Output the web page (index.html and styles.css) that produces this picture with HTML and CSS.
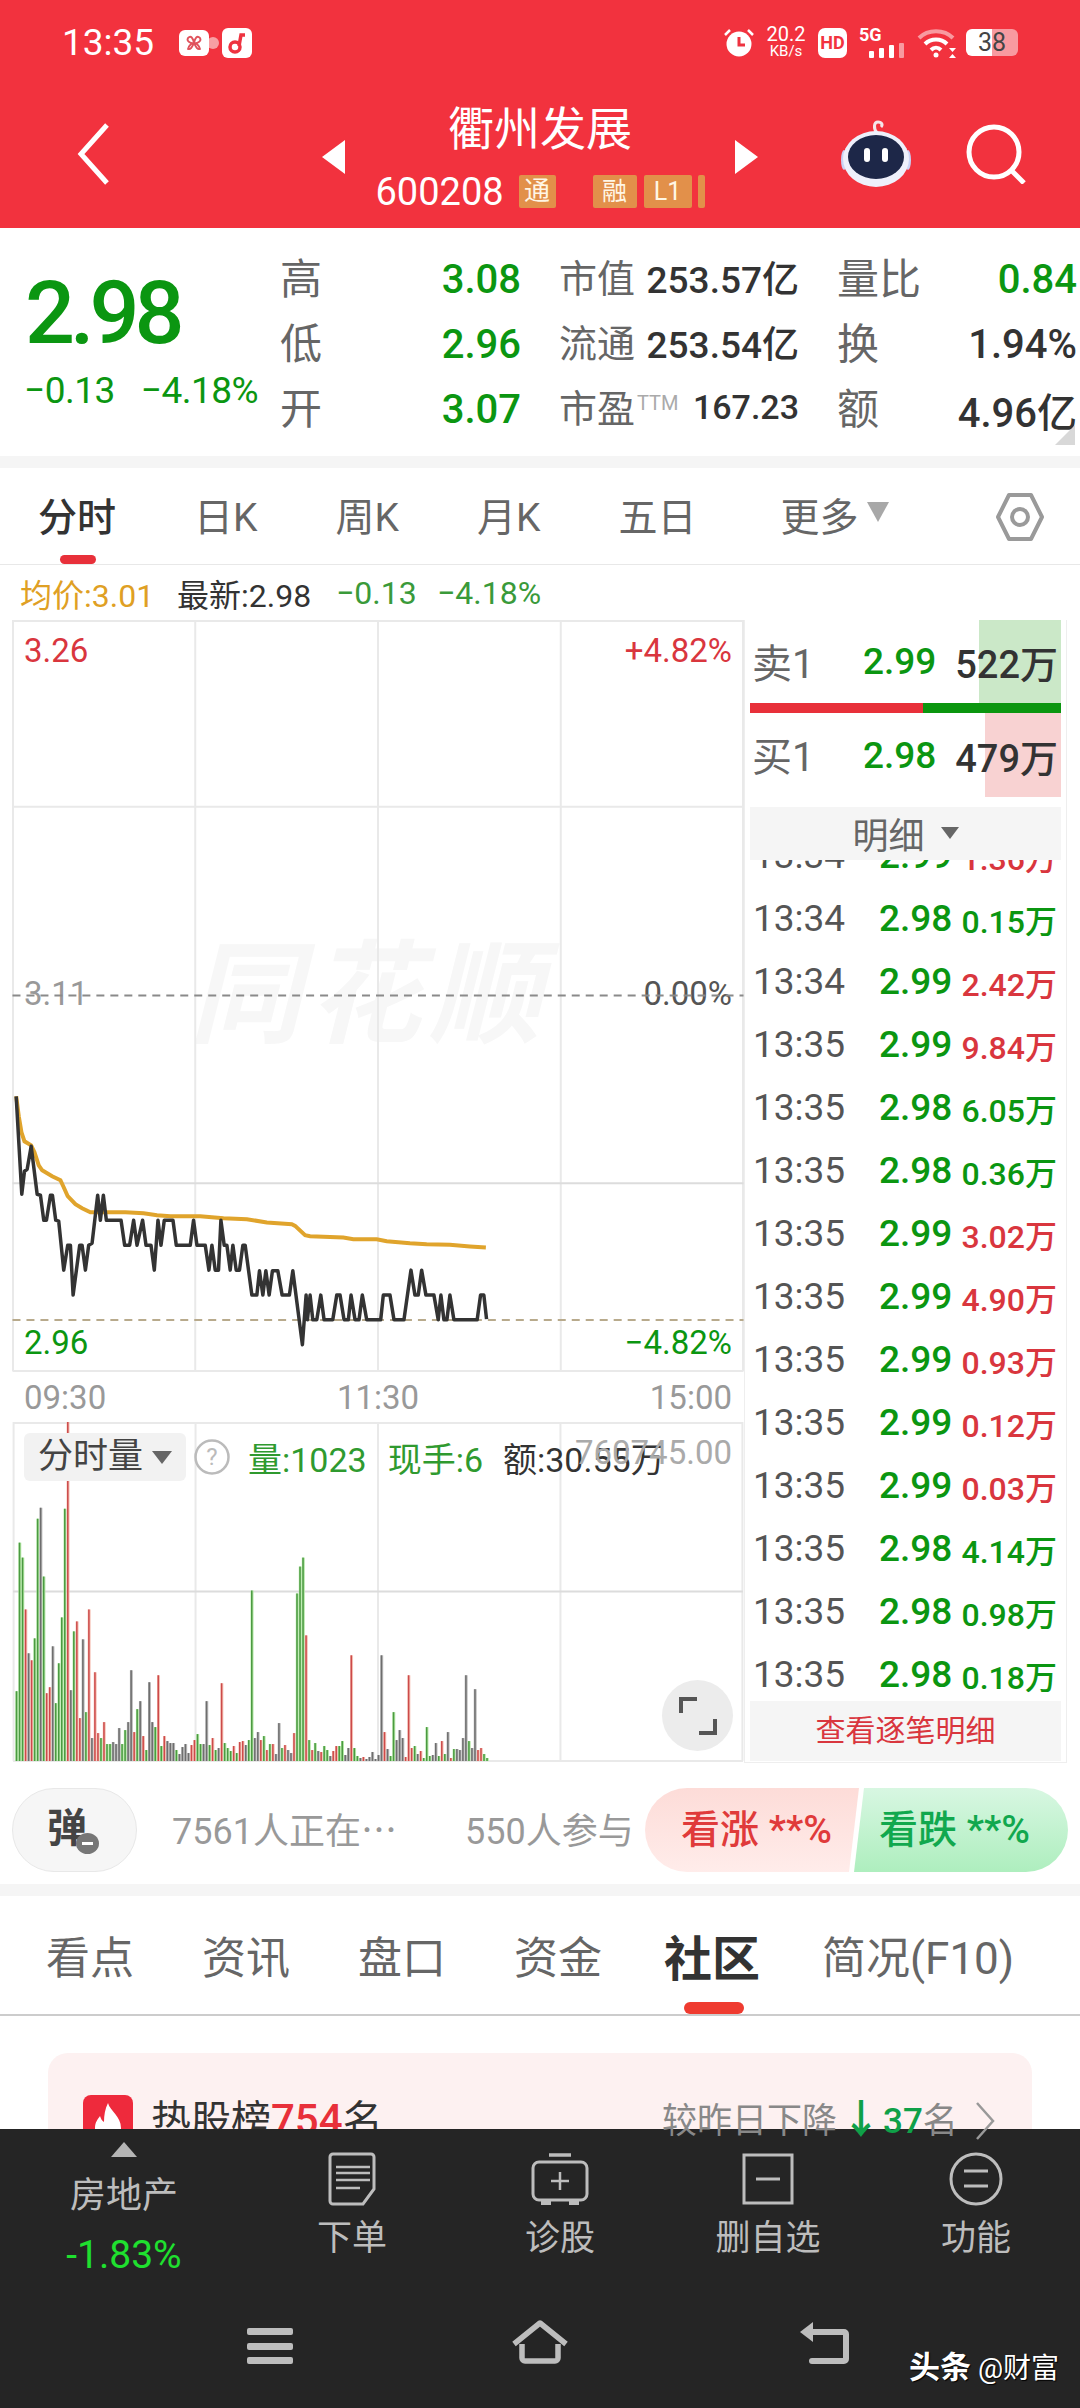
FILE: index.html
```html
<!DOCTYPE html>
<html>
<head>
    <title>衢州发展</title>
    <meta name="viewport" content="width=device-width, initial-scale=1.0">
    <link rel="stylesheet" href="styles.css">
</head>
<body>
<div class="screen">
<main class="content">
    <header class="top-header">
        <div class="status-bar">
            <span class="status-time">13:35</span>
            <svg class="status-app-a" viewBox="0 0 40 26"><circle cx="34" cy="13" r="6" fill="#f7a0a4"/><rect width="30" height="26" rx="6" fill="#fff"/><path d="M9 8c3-3 5 0 6 5 1-5 3-8 6-5 2 3-3 6-6 5-3 1-8-2-6-5zm0 11c1-4 4-6 6-6s5 2 6 6c-3 1-4-2-6-6-2 4-3 7-6 6z" fill="none" stroke="#e0525c" stroke-width="1.8"/></svg>
            <svg class="status-app-b" viewBox="0 0 30 30"><rect width="30" height="30" rx="6" fill="#fff"/><circle cx="13" cy="19" r="5" fill="none" stroke="#ee3340" stroke-width="3.5"/><path d="M17 18 19 7h4" fill="none" stroke="#ee3340" stroke-width="3.5"/></svg>
            <div class="status-right">
                <svg class="status-alarm" viewBox="0 0 32 30"><circle cx="16" cy="16" r="12.5" fill="#fff"/><path d="M16 9v8h6" fill="none" stroke="#ee3340" stroke-width="3"/><path d="M2 7 7 2M30 7l-5-5" stroke="#fff" stroke-width="2.5" fill="none"/></svg>
                <div class="status-speed"><span class="speed-num">20.2</span><span class="speed-unit">KB/s</span></div>
                <span class="status-hd">HD</span>
                <div class="status-signal">
                    <span class="signal-5g">5G</span>
                    <svg class="signal-bars" viewBox="0 0 35 15"><rect x="0" y="8" width="5" height="7" rx="1" fill="#fff"/><rect x="10" y="5" width="5" height="10" rx="1" fill="#fff"/><rect x="20" y="2" width="5" height="13" rx="1" fill="#fff"/><rect x="30" y="0" width="5" height="15" rx="1" fill="#f89aa0"/></svg>
                </div>
                <svg class="status-wifi" viewBox="0 0 40 30"><path d="M2 10c9-9 25-9 34 0" fill="none" stroke="#f89aa0" stroke-width="4"/><path d="M8 16c6-6 16-6 22 0" fill="none" stroke="#fff" stroke-width="4"/><path d="M14 22c3-3 7-3 10 0" fill="none" stroke="#fff" stroke-width="4"/><circle cx="19" cy="27" r="2.5" fill="#fff"/><path d="M32 20h7l-3.5 4zM32 30h7l-3.5-4z" fill="#fff"/></svg>
                <div class="status-battery"><span class="battery-num">38</span></div>
            </div>
        </div>
        <div class="nav-row">
            <svg class="nav-back" viewBox="0 0 33 64"><path d="M30 3 4 32l26 29" fill="none" stroke="#fff" stroke-width="5"/></svg>
            <span class="stock-arrow stock-arrow-left"></span>
            <div class="stock-title">
                <div class="stock-name">衢州发展</div>
                <div class="stock-code-row">
                    <span class="stock-code">600208</span>
                    <span class="stock-tag stock-tag-tong">通</span>
                    <span class="stock-tag stock-tag-rong">融</span>
                    <span class="stock-tag stock-tag-l1">L1</span>
                    <span class="stock-tag stock-tag-cut"></span>
                </div>
            </div>
            <span class="stock-arrow stock-arrow-right"></span>
            <svg class="nav-robot" viewBox="0 0 72 68">
                <path d="M37 13C33 8 34 2 38 2s5 3 3 5" fill="none" stroke="#f4e6ea" stroke-width="3"/>
                <ellipse cx="4" cy="40" rx="3" ry="10" fill="#c9d2f5"/>
                <ellipse cx="68" cy="40" rx="3" ry="10" fill="#c9d2f5"/>
                <ellipse cx="36" cy="39" rx="33" ry="28" fill="#eef0fb"/>
                <ellipse cx="36" cy="37" rx="28" ry="22" fill="#1d2748"/>
                <rect x="24" y="28" width="6" height="14" rx="3" fill="#fff"/>
                <rect x="42" y="28" width="6" height="14" rx="3" fill="#fff"/>
            </svg>
            <svg class="nav-search" viewBox="0 0 60 60"><circle cx="28" cy="28" r="25" fill="none" stroke="#fff" stroke-width="5"/><path d="M46 47l12 12" stroke="#fff" stroke-width="5"/></svg>
        </div>
    </header>

    <section class="quote">
        <div class="quote-main">
            <div class="quote-price">2.98</div>
            <div class="quote-change"><span>−0.13</span><span>−4.18%</span></div>
        </div>
        <div class="quote-grid">
            <div class="quote-cell"><span class="quote-label">高</span><span class="quote-num quote-green">3.08</span></div>
            <div class="quote-cell"><span class="quote-label quote-label-sm">市值</span><span class="quote-value">253.57亿</span></div>
            <div class="quote-cell"><span class="quote-label">量比</span><span class="quote-num quote-green">0.84</span></div>
            <div class="quote-cell"><span class="quote-label">低</span><span class="quote-num quote-green">2.96</span></div>
            <div class="quote-cell"><span class="quote-label quote-label-sm">流通</span><span class="quote-value">253.54亿</span></div>
            <div class="quote-cell"><span class="quote-label">换</span><span class="quote-num">1.94%</span></div>
            <div class="quote-cell"><span class="quote-label">开</span><span class="quote-num quote-green">3.07</span></div>
            <div class="quote-cell"><span class="quote-label quote-label-sm">市盈<sup class="quote-ttm">TTM</sup></span><span class="quote-value quote-value-pe">167.23</span></div>
            <div class="quote-cell"><span class="quote-label">额</span><span class="quote-num">4.96亿</span></div>
        </div>
        <span class="quote-corner"></span>
    </section>

    <nav class="chart-tabs">
        <span class="chart-tab chart-tab-on">分时</span>
        <span class="chart-tab">日K</span>
        <span class="chart-tab">周K</span>
        <span class="chart-tab">月K</span>
        <span class="chart-tab">五日</span>
        <span class="chart-tab chart-tab-more">更多<i class="more-caret"></i></span>
        <svg class="chart-setting" viewBox="0 0 50 48"><path d="M14 2h22l11 22-11 22H14L3 24z" fill="none" stroke="#9a9a9a" stroke-width="4" stroke-linejoin="round"/><circle cx="25" cy="24" r="8" fill="none" stroke="#9a9a9a" stroke-width="4"/></svg>
    </nav>

    <div class="legend">
        <span class="legend-gold">均价:3.01</span>
        <span class="legend-dark">最新:2.98</span>
        <span class="legend-green">−0.13</span>
        <span class="legend-green">−4.18%</span>
    </div>

    <section class="market">
        <div class="market-left">
            <div class="price-chart">
                <span class="chart-mark">同花顺</span>
                <span class="chart-label label-left label-top label-red">3.26</span>
                <span class="chart-label label-right label-top label-red">+4.82%</span>
                <span class="chart-label label-left label-mid label-grey">3.11</span>
                <span class="chart-label label-right label-mid label-dark">0.00%</span>
                <span class="chart-label label-left label-low label-green">2.96</span>
                <span class="chart-label label-right label-low label-green">−4.82%</span>
                <svg class="chart-svg" viewBox="12 620 732 753">
                    <path class="grid-line" d="M12.5 620v752M195 620v752M378 620v752M561 620v752M743.5 620v752M12 621h732M12 807h732M12 1372h732"/>
                    <path class="grid-line-dark" d="M12 1184h732"/>
                    <path class="dash-mid" d="M12 996h732"/>
                    <path class="dash-low" d="M12 1321h732"/>
                    <polyline class="line-avg" points="15.7,1097 18.3,1117 21,1133 24,1142 30.7,1146 34,1153 38.3,1166 41.7,1171 51.7,1177 60,1181 63.3,1188 67.3,1197 75,1205 81.7,1209 90,1213 110,1213 125,1213 143.3,1214 156.7,1216 170,1217 200,1217 223.3,1219 246.7,1220 266.7,1223.3 291.7,1225 295,1226.7 305,1236 310,1237 343.3,1238.3 353.3,1240 376.7,1240 386.7,1242 410,1244 426.7,1245 450,1245.7 470,1247.3 486,1248.3"/>
                    <polyline class="line-price" points="15.7,1097 21.3,1195 24,1172 26.7,1170 30.7,1147 36.7,1195 40,1196 43.3,1221 46,1221 50,1196 52,1196 55.3,1221 58.3,1222 63.3,1271 67.3,1246 70,1246 72.7,1296 79.3,1246 81.7,1246 85,1271 88.3,1246 91.7,1244 97.3,1196 100,1221 103,1196 106,1221 120.7,1221 124.3,1246 129.3,1246 133.3,1221 136.7,1246 142.3,1221 145.7,1246 150.7,1246 154,1271 157.7,1221 160.7,1246 164,1221 172.7,1221 176,1246 190,1246 193.3,1221 196.7,1246 205,1246 208.7,1271 211.7,1246 215,1271 218.3,1271 220.7,1221 224,1246 226.7,1246 230,1271 232.7,1246 236,1271 239.3,1271 242.7,1246 245,1246 251.7,1296 256.7,1296 259.3,1271.7 262.7,1296 265.7,1271.7 269,1296 272.3,1271.7 277.7,1271.7 282,1296 289.3,1296 292.7,1271.7 302.3,1345.7 306,1296 307.3,1320.7 310,1296 312.7,1320.7 316.7,1320.7 320.7,1296 324,1320.7 332.7,1320.7 336.7,1296 340,1296 344,1320.7 348.3,1320.7 351,1296 355,1320.7 359,1320.7 362.3,1296 366.7,1320.7 380.7,1320.7 383.3,1296 390,1296 394,1320.7 404,1320.7 411,1271 415,1296 418.3,1296 421.7,1271 426,1296 434,1296 438.3,1320.7 441,1296 444,1320.7 447,1320.7 450,1296 454,1320.7 477.3,1320.7 480.7,1296 484,1296 486.7,1320"/>
                </svg>
            </div>
            <div class="time-axis"><span>09:30</span><span>11:30</span><span>15:00</span></div>
            <div class="volume-chart">
                <svg class="chart-svg" id="volumeSvg" viewBox="12 1422 732 341">
                    <path class="grid-line" d="M12.5 1422v340M195 1422v340M378 1422v340M561 1422v340M743.5 1422v340M12 1423h732M12 1762h732"/>
                    <path class="grid-line-dark" d="M12 1592h732"/>
                </svg>
                <div class="volume-head">
                    <span class="volume-select">分时量<i class="select-caret"></i></span>
                    <svg class="volume-help" viewBox="0 0 36 36"><circle cx="18" cy="18" r="16.5" fill="none" stroke="#bbb" stroke-width="2.5"/><text x="18" y="26" text-anchor="middle" class="help-mark">?</text></svg>
                    <span class="volume-green">量:1023</span>
                    <span class="volume-green">现手:6</span>
                    <span class="volume-dark">额:30.55万</span>
                </div>
                <span class="volume-max">760745.00</span>
                <span class="expand-btn">
                    <svg viewBox="0 0 38 38"><path d="M2 16V2h16M36 22v14H20" fill="none" stroke="#555" stroke-width="4"/></svg>
                </span>
            </div>
        </div>

        <aside class="side-panel">
            <div class="depth-row">
                <span class="depth-fill depth-fill-sell"></span>
                <span class="depth-label">卖1</span><span class="depth-price">2.99</span><span class="depth-vol">522万</span>
            </div>
            <div class="depth-bar"><span class="depth-bar-red"></span><span class="depth-bar-green"></span></div>
            <div class="depth-row depth-row-buy">
                <span class="depth-fill depth-fill-buy"></span>
                <span class="depth-label">买1</span><span class="depth-price">2.98</span><span class="depth-vol">479万</span>
            </div>
            <div class="detail-head">明细<i class="detail-caret"></i></div>
            <div class="ticks">
                <div class="tick tick-first"><span class="tick-time">13:34</span><span class="tick-price">2.99</span><span class="tick-vol tick-red">1.36万</span></div>
                <div class="tick"><span class="tick-time">13:34</span><span class="tick-price">2.98</span><span class="tick-vol tick-green">0.15万</span></div>
                <div class="tick"><span class="tick-time">13:34</span><span class="tick-price">2.99</span><span class="tick-vol tick-red">2.42万</span></div>
                <div class="tick"><span class="tick-time">13:35</span><span class="tick-price">2.99</span><span class="tick-vol tick-red">9.84万</span></div>
                <div class="tick"><span class="tick-time">13:35</span><span class="tick-price">2.98</span><span class="tick-vol tick-green">6.05万</span></div>
                <div class="tick"><span class="tick-time">13:35</span><span class="tick-price">2.98</span><span class="tick-vol tick-green">0.36万</span></div>
                <div class="tick"><span class="tick-time">13:35</span><span class="tick-price">2.99</span><span class="tick-vol tick-red">3.02万</span></div>
                <div class="tick"><span class="tick-time">13:35</span><span class="tick-price">2.99</span><span class="tick-vol tick-red">4.90万</span></div>
                <div class="tick"><span class="tick-time">13:35</span><span class="tick-price">2.99</span><span class="tick-vol tick-red">0.93万</span></div>
                <div class="tick"><span class="tick-time">13:35</span><span class="tick-price">2.99</span><span class="tick-vol tick-red">0.12万</span></div>
                <div class="tick"><span class="tick-time">13:35</span><span class="tick-price">2.99</span><span class="tick-vol tick-red">0.03万</span></div>
                <div class="tick"><span class="tick-time">13:35</span><span class="tick-price">2.98</span><span class="tick-vol tick-green">4.14万</span></div>
                <div class="tick"><span class="tick-time">13:35</span><span class="tick-price">2.98</span><span class="tick-vol tick-green">0.98万</span></div>
                <div class="tick"><span class="tick-time">13:35</span><span class="tick-price">2.98</span><span class="tick-vol tick-green">0.18万</span></div>
            </div>
            <div class="detail-foot">查看逐笔明细</div>
        </aside>
    </section>

    <section class="vote-bar">
        <div class="danmu-btn">弹<span class="danmu-off"></span></div>
        <span class="vote-text vote-text-live">7561人正在⋯</span>
        <span class="vote-text vote-text-count">550人参与</span>
        <div class="vote-pills">
            <span class="vote-pill vote-up">看涨 **%</span>
            <span class="vote-pill vote-down">看跌 **%</span>
        </div>
    </section>

    <nav class="info-tabs">
        <span class="info-tab">看点</span>
        <span class="info-tab">资讯</span>
        <span class="info-tab">盘口</span>
        <span class="info-tab">资金</span>
        <span class="info-tab info-tab-on">社区</span>
        <span class="info-tab">简况(F10)</span>
    </nav>

    <section class="hot-card">
        <svg class="hot-icon" viewBox="0 0 50 50"><rect width="50" height="50" rx="8" fill="#ee2a3c"/><path d="M25 8c2 8 13 13 13 25 0 8-6 13-13 13s-13-5-13-13c0-6 3-9 5-12 1 3 2 5 4 6 0-7 1-13 4-19z" fill="#fff"/></svg>
        <span class="hot-title">热股榜<b class="hot-rank">754</b>名</span>
        <span class="hot-trend">较昨日下降<i class="hot-down">↓</i><b class="hot-num">37</b>名</span>
        <svg class="hot-more" viewBox="0 0 20 40"><path d="M2 2l16 18L2 38" fill="none" stroke="#999" stroke-width="2.5"/></svg>
    </section>
</main>

<footer class="bottom-bar">
    <div class="tool-row">
        <div class="tool-sector">
            <span class="sector-caret"></span>
            <span class="sector-name">房地产</span>
            <span class="sector-rate">-1.83%</span>
        </div>
        <div class="tool">
            <svg class="tool-icon" viewBox="0 0 48 54"><path d="M5 2h38a3 3 0 0 1 3 3v32L35 52H5a3 3 0 0 1-3-3V5a3 3 0 0 1 3-3z" fill="none" stroke="#bdbdbd" stroke-width="3"/><path d="M8 15h34M8 21h34M8 28h34M8 36h24" stroke="#bdbdbd" stroke-width="2.5"/></svg>
            <span class="tool-text">下单</span>
        </div>
        <div class="tool">
            <svg class="tool-icon" viewBox="0 0 58 54"><path d="M18 3h22" stroke="#bdbdbd" stroke-width="3.5"/><rect x="2" y="10" width="54" height="38" rx="6" fill="none" stroke="#bdbdbd" stroke-width="3"/><path d="M29 20v18M20 29h18" stroke="#bdbdbd" stroke-width="2.5"/><path d="M10 48h10v5H10zM38 48h10v5H38z" fill="#bdbdbd"/></svg>
            <span class="tool-text">诊股</span>
        </div>
        <div class="tool">
            <svg class="tool-icon" viewBox="0 0 58 54"><rect x="5" y="3" width="48" height="48" fill="none" stroke="#bdbdbd" stroke-width="3"/><path d="M17 27h24" stroke="#bdbdbd" stroke-width="3"/></svg>
            <span class="tool-text">删自选</span>
        </div>
        <div class="tool">
            <svg class="tool-icon" viewBox="0 0 58 54"><circle cx="29" cy="27" r="25" fill="none" stroke="#bdbdbd" stroke-width="3"/><path d="M17 19h24M17 34h24" stroke="#bdbdbd" stroke-width="3"/></svg>
            <span class="tool-text">功能</span>
        </div>
    </div>
    <div class="sys-nav">
        <svg class="sys-menu" viewBox="0 0 46 36"><rect width="46" height="7" rx="2" y="0"/><rect width="46" height="7" rx="2" y="15"/><rect width="46" height="7" rx="2" y="29"/></svg>
        <svg class="sys-home" viewBox="0 0 58 44"><path d="M3 24 29 3l26 21M11 24v14a3 3 0 0 0 3 3h30a3 3 0 0 0 3-3V24" fill="none" stroke="#bdbdbd" stroke-width="5.5" stroke-linejoin="round"/></svg>
        <svg class="sys-return" viewBox="0 0 50 42"><path d="M8 10h36a2 2 0 0 1 2 2v25a2 2 0 0 1-2 2H12" fill="none" stroke="#bdbdbd" stroke-width="6" stroke-linecap="round"/><path d="M13 0v20L0 10z" fill="#bdbdbd"/></svg>
    </div>
    <div class="source-mark"><b class="source-head">头条</b> @财富</div>
</footer>
</div>
<script src="chart.js"></script>
</body>
</html>
```

FILE: styles.css
```css
body {
    margin: 0;
    background: #fff;
    font-family: Roboto, "Noto Sans CJK SC", sans-serif;
    color: #333;
}

i {
    font-style: normal;
}

.screen {
    position: relative;
    width: 1080px;
    height: 2408px;
    overflow: hidden;
    display: flex;
    flex-direction: column;
}

.content {
    height: 2129px;
    overflow: hidden;
    flex: none;
}

/* red header */
.top-header {
    height: 228px;
    background: #f2323e;
    color: #fff;
}

.status-bar {
    height: 80px;
    display: flex;
    align-items: center;
    padding: 5px 62px 0 62px;
    box-sizing: border-box;
}

.status-time {
    font-size: 37px;
    width: 117px;
}

.status-app-a {
    width: 40px;
    height: 26px;
}

.status-app-b {
    width: 30px;
    height: 30px;
    margin-left: 3px;
}

.status-right {
    margin-left: auto;
    display: flex;
    align-items: center;
}

.status-alarm {
    width: 32px;
    height: 30px;
}

.status-speed {
    display: flex;
    flex-direction: column;
    align-items: center;
    margin-left: 12px;
    width: 38px;
    line-height: 15px;
}

.speed-num {
    font-size: 20px;
}

.speed-unit {
    font-size: 15px;
    margin-top: 2px;
    white-space: nowrap;
}

.status-hd {
    width: 29px;
    height: 30px;
    margin-left: 13px;
    background: #fff;
    border-radius: 7px;
    color: #f2323e;
    font-size: 18px;
    font-weight: 700;
    line-height: 30px;
    text-align: center;
}

.status-signal {
    display: flex;
    flex-direction: column;
    margin-left: 12px;
    width: 45px;
}

.signal-5g {
    font-size: 18px;
    font-weight: 700;
    line-height: 16px;
}

.signal-bars {
    width: 35px;
    height: 15px;
    margin-left: 10px;
}

.status-wifi {
    width: 40px;
    height: 30px;
    margin-left: 13px;
}

.status-battery {
    width: 52px;
    height: 27px;
    margin-left: 9px;
    border-radius: 6px;
    background: linear-gradient(90deg, #fff 0%, #fff 50%, #f89aa0 50%, #f89aa0 100%);
    text-align: center;
}

.battery-num {
    color: #444;
    font-size: 25px;
    line-height: 27px;
    display: block;
}

.nav-row {
    height: 148px;
    display: flex;
    align-items: center;
}

.nav-back {
    width: 33px;
    height: 64px;
    margin-left: 77px;
}

.stock-arrow {
    width: 0;
    height: 0;
    border-top: 17px solid transparent;
    border-bottom: 17px solid transparent;
    margin-top: 6px;
}

.stock-arrow-left {
    margin-left: 212px;
    border-right: 23px solid #fff;
}

.stock-arrow-right {
    border-left: 23px solid #fff;
}

.stock-title {
    width: 390px;
    height: 148px;
    display: flex;
    flex-direction: column;
    align-items: center;
    box-sizing: border-box;
    padding-top: 22px;
}

.stock-name {
    font-size: 46px;
    line-height: 54px;
}

.stock-code-row {
    display: flex;
    align-items: center;
    margin-top: 19px;
    height: 33px;
}

.stock-code {
    font-size: 38px;
    width: 129px;
    white-space: nowrap;
}

.stock-tag {
    height: 33px;
    background: #e2904a;
    color: #fff6e5;
    font-size: 25px;
    line-height: 33px;
    text-align: center;
    border-radius: 2px;
}

.stock-tag-tong {
    width: 37px;
    margin-left: 14px;
    font-size: 26px;
}

.stock-tag-rong {
    width: 44px;
    margin-left: 37px;
}

.stock-tag-l1 {
    width: 48px;
    margin-left: 7px;
}

.stock-tag-cut {
    width: 7px;
    margin-left: 6px;
}

.nav-robot {
    width: 72px;
    height: 68px;
    margin-left: 82px;
}

.nav-search {
    width: 60px;
    height: 60px;
    margin-left: 54px;
}

/* quote block */
.quote {
    position: relative;
    height: 228px;
    display: flex;
    padding-left: 27px;
    border-bottom: 12px solid #f5f5f5;
}

.quote-main {
    width: 253px;
    flex: none;
}

.quote-price {
    margin: 50px 0 0 -2px;
    font-size: 88px;
    line-height: 70px;
    font-weight: 500;
    letter-spacing: -5px;
    color: #0b9611;
}

.quote-change {
    display: flex;
    gap: 26px;
    margin: 21px 0 0 -3px;
    font-size: 37px;
    line-height: 44px;
    letter-spacing: -0.5px;
    color: #0b9611;
    white-space: nowrap;
}

.quote-grid {
    display: grid;
    grid-template-columns: 241px 240px 240px;
    grid-template-rows: repeat(3, 65px);
    column-gap: 38px;
    margin-top: 19px;
}

.quote-cell {
    display: flex;
    justify-content: space-between;
    align-items: center;
    white-space: nowrap;
}

.quote-label {
    margin-top: -8px;
    font-size: 42px;
    color: #666;
}

.quote-label-sm {
    font-size: 38px;
}

.quote-ttm {
    font-size: 20px;
    color: #aaa;
    vertical-align: 12px;
    line-height: 0;
    margin-left: 2px;
}

.quote-num {
    font-size: 40px;
    font-weight: 500;
    color: #333;
}

.quote-value {
    margin-top: -6px;
    font-size: 37px;
    font-weight: 500;
    color: #333;
}

.quote-value-pe {
    font-size: 34px;
}

.quote-green {
    color: #0b9611;
}

.quote-corner {
    position: absolute;
    right: 5px;
    bottom: 11px;
    width: 0;
    height: 0;
    border-left: 20px solid transparent;
    border-bottom: 20px solid #d8d8d8;
}

/* chart tabs */
.chart-tabs {
    position: relative;
    display: flex;
    align-items: center;
    gap: 78px;
    padding-left: 38px;
    border-bottom: 1px solid #e8e8e8;
    box-sizing: border-box;
    height: 97px;
}

.chart-tab {
    font-size: 39px;
    color: #666;
    white-space: nowrap;
    margin-top: -5px;
}

.chart-tab-on {
    color: #333;
    font-weight: 500;
}

.chart-tab-on::after {
    content: "";
    position: absolute;
    left: 60px;
    bottom: 0;
    width: 36px;
    height: 9px;
    border-radius: 5px;
    background: #e8303a;
}

.chart-tab-more {
    margin-left: 6px;
    display: flex;
    align-items: center;
}

.more-caret {
    width: 0;
    height: 0;
    margin: -4px 0 0 8px;
    border-left: 11px solid transparent;
    border-right: 11px solid transparent;
    border-top: 20px solid #a8a8a8;
}

.chart-setting {
    position: absolute;
    left: 995px;
    top: 25px;
    width: 50px;
    height: 48px;
}

.legend {
    height: 53px;
    display: flex;
    align-items: center;
    padding: 3px 0 0 20px;
    box-sizing: border-box;
    font-size: 32px;
    white-space: nowrap;
}

.legend-gold {
    color: #dfa024;
    width: 157px;
}

.legend-dark {
    color: #333;
    width: 159px;
}

.legend-green {
    color: #3a9a3a;
    width: 101px;
}

/* market: chart + side panel */
.market {
    height: 1152px;
    display: flex;
    padding-left: 12px;
    overflow: hidden;
}

.market-left {
    width: 732px;
    flex: none;
    padding-top: 2px;
}

.price-chart {
    position: relative;
    height: 752px;
}

.chart-svg {
    position: absolute;
    left: 0;
    top: 0;
    width: 732px;
    height: 100%;
}

.grid-line {
    stroke: #e9e9e9;
    stroke-width: 2;
    fill: none;
}

.grid-line-dark {
    stroke: #dcdcdc;
    stroke-width: 2;
    fill: none;
}

.dash-mid {
    stroke: #8a8a8a;
    stroke-width: 2;
    stroke-dasharray: 8 6;
    fill: none;
}

.dash-low {
    stroke: #b8aa8c;
    stroke-width: 2;
    stroke-dasharray: 8 6;
    fill: none;
}

.line-avg {
    stroke: #e0a42c;
    stroke-width: 4;
    fill: none;
}

.line-price {
    stroke: #333;
    stroke-width: 3.5;
    fill: none;
    stroke-linejoin: round;
}

.chart-mark {
    position: absolute;
    left: 177px;
    top: 318px;
    font-size: 112px;
    line-height: 116px;
    font-style: italic;
    font-weight: 700;
    letter-spacing: 8px;
    color: #f7f7f7;
    white-space: nowrap;
}

.chart-label {
    position: absolute;
    font-size: 33px;
    line-height: 34px;
}

.label-left {
    left: 12px;
}

.label-right {
    right: 12px;
}

.label-top {
    top: 14px;
}

.label-mid {
    top: 357px;
}

.label-low {
    top: 706px;
}

.label-red {
    color: #d9363e;
}

.label-grey {
    color: #999;
}

.label-dark {
    color: #555;
}

.label-green {
    color: #0b9611;
}

.time-axis {
    height: 50px;
    display: flex;
    align-items: center;
    justify-content: space-between;
    padding: 0 12px;
    font-size: 33px;
    color: #999;
}

.volume-chart {
    position: relative;
    height: 340px;
}

.volume-head {
    position: absolute;
    left: 12px;
    top: 11px;
    display: flex;
    align-items: center;
    height: 48px;
    font-size: 34px;
    white-space: nowrap;
}

.volume-select {
    width: 162px;
    height: 48px;
    box-sizing: border-box;
    padding-left: 14px;
    background: #f2f2f2;
    border-radius: 6px;
    color: #444;
    line-height: 48px;
    font-size: 35px;
    display: flex;
    align-items: center;
}

.select-caret {
    width: 0;
    height: 0;
    margin-left: 9px;
    border-left: 10px solid transparent;
    border-right: 10px solid transparent;
    border-top: 13px solid #666;
}

.volume-help {
    width: 36px;
    height: 36px;
    margin-left: 8px;
}

.help-mark {
    font-size: 24px;
    fill: #bbb;
}

.volume-green {
    color: #2f9a2f;
    margin-left: 18px;
}

.volume-green + .volume-green {
    margin-left: 21px;
}

.volume-dark {
    color: #333;
    margin-left: 20px;
}

.volume-max {
    position: absolute;
    right: 12px;
    top: 14px;
    font-size: 33px;
    line-height: 34px;
    color: #aaa;
}

.expand-btn {
    position: absolute;
    left: 650px;
    top: 258px;
    width: 71px;
    height: 71px;
    border-radius: 50%;
    background: #ececec;
    display: flex;
    align-items: center;
    justify-content: center;
}

.expand-btn svg {
    width: 38px;
    height: 38px;
}

/* side panel */
.side-panel {
    width: 323px;
    height: 1143px;
    margin-top: 2px;
    padding: 0 5px;
    box-sizing: border-box;
    border: solid #eee;
    border-width: 0 1px 1px 1px;
    flex: none;
    display: flex;
    flex-direction: column;
}

.depth-row {
    position: relative;
    height: 83px;
    display: flex;
    align-items: center;
    padding: 0 3px 0 2px;
    flex: none;
}

.depth-row-buy {
    height: 84px;
}

.depth-fill {
    position: absolute;
    right: 0;
    top: 0;
    bottom: 0;
}

.depth-fill-sell {
    width: 82px;
    background: #cbe8c8;
}

.depth-fill-buy {
    width: 76px;
    background: #f8d2d2;
}

.depth-label {
    position: relative;
    width: 111px;
    font-size: 40px;
    color: #666;
    margin-top: -2px;
}

.depth-price {
    position: relative;
    width: 89px;
    font-size: 37px;
    font-weight: 500;
    color: #0b9611;
}

.depth-vol {
    position: relative;
    flex: 1;
    font-size: 38px;
    font-weight: 500;
    text-align: right;
    color: #333;
    white-space: nowrap;
}

.depth-bar {
    height: 10px;
    display: flex;
    flex: none;
}

.depth-bar-red {
    width: 173px;
    background: #e8303a;
}

.depth-bar-green {
    flex: 1;
    background: #0b960f;
}

.detail-head {
    height: 53px;
    margin-top: 10px;
    flex: none;
    background: #f5f5f5;
    color: #666;
    font-size: 36px;
    padding-bottom: 2px;
    box-sizing: border-box;
    display: flex;
    align-items: center;
    justify-content: center;
}

.detail-caret {
    width: 0;
    height: 0;
    margin-left: 16px;
    border-left: 9px solid transparent;
    border-right: 9px solid transparent;
    border-top: 12px solid #666;
}

.ticks {
    height: 841px;
    flex: none;
    overflow: hidden;
}

.tick {
    height: 63px;
    display: flex;
    align-items: center;
    padding: 0 4px 0 3px;
    white-space: nowrap;
}

.tick-first {
    margin-top: -36px;
}

.tick-time {
    width: 126px;
    font-size: 37px;
    color: #555;
}

.tick-price {
    font-size: 37px;
    font-weight: 500;
    color: #0b9611;
}

.tick-vol {
    margin-left: auto;
    font-size: 32px;
    font-weight: 500;
}

.tick-red {
    color: #d9363e;
}

.tick-green {
    color: #0b9611;
}

.detail-foot {
    height: 60px;
    flex: none;
    background: #f5f5f5;
    color: #d9363e;
    font-size: 30px;
    line-height: 60px;
    text-align: center;
}

/* vote bar */
.vote-bar {
    box-sizing: border-box;
    display: flex;
    align-items: flex-start;
    padding: 18px 0 0 12px;
    border-bottom: 12px solid #f5f5f5;
    height: 126px;
}

.danmu-btn {
    position: relative;
    width: 125px;
    height: 84px;
    box-sizing: border-box;
    border: 1px solid #e8e8e8;
    border-radius: 42px;
    background: #f6f6f6;
    color: #444;
    font-size: 40px;
    font-weight: 700;
    line-height: 80px;
    padding-left: 34px;
}

.danmu-off {
    position: absolute;
    left: 63px;
    top: 44px;
    width: 23px;
    height: 21px;
    border-radius: 50%;
    background: #777;
}

.danmu-off::after {
    content: "";
    position: absolute;
    left: 6px;
    top: 9px;
    width: 11px;
    height: 3px;
    background: #fff;
}

.vote-text {
    font-size: 36px;
    line-height: 88px;
    color: #999;
    white-space: nowrap;
}

.vote-text-live {
    margin-left: 35px;
    width: 224px;
}

.vote-text-count {
    margin-left: 69px;
    width: 172px;
}

.vote-pills {
    display: flex;
    margin-left: 8px;
}

.vote-pill {
    width: 214px;
    height: 84px;
    font-size: 39px;
    font-weight: 500;
    line-height: 84px;
    white-space: nowrap;
}

.vote-up {
    border-radius: 42px 0 0 42px;
    background: linear-gradient(180deg, #fddcd8 0%, #ffecea 100%);
    color: #e03a3a;
    padding-left: 36px;
    box-sizing: border-box;
    clip-path: polygon(0 0, 100% 0, calc(100% - 10px) 100%, 0 100%);
}

.vote-down {
    margin-left: -5px;
    border-radius: 0 42px 42px 0;
    background: linear-gradient(180deg, #d8f7e2 0%, #aeeebe 100%);
    color: #11a84e;
    padding-left: 25px;
    box-sizing: border-box;
    clip-path: polygon(10px 0, 100% 0, 100% 100%, 0 100%);
}

/* info tabs */
.info-tabs {
    position: relative;
    height: 120px;
    box-sizing: border-box;
    border-bottom: 2px solid #ccc;
    display: flex;
    align-items: center;
    gap: 68px;
    padding: 0 0 0 46px;
}

.info-tab {
    font-size: 44px;
    color: #666;
    white-space: nowrap;
}

.info-tab-on {
    margin: 0 -6px;
    font-size: 48px;
    font-weight: 700;
    color: #333;
}

.info-tab-on::after {
    content: "";
    position: absolute;
    left: 684px;
    bottom: 0;
    width: 60px;
    height: 12px;
    border-radius: 6px;
    background: #ef3b30;
}

/* hot rank card */
.hot-card {
    height: 200px;
    margin: 37px 48px 0;
    padding: 42px 0 0 35px;
    box-sizing: border-box;
    background: #fdf1f1;
    border-radius: 20px;
    display: flex;
    align-items: flex-start;
    white-space: nowrap;
}

.hot-icon {
    width: 50px;
    height: 50px;
    flex: none;
}

.hot-title {
    margin-left: 18px;
    font-size: 40px;
    line-height: 50px;
    color: #333;
}

.hot-rank {
    color: #e8303a;
    font-weight: 500;
    font-size: 42px;
}

.hot-trend {
    position: absolute;
    left: 662px;
    font-size: 35px;
    line-height: 50px;
    color: #888;
}

.hot-down {
    color: #0fa048;
    font-size: 40px;
    font-weight: 700;
    margin: 0 2px 0 4px;
}

.hot-num {
    color: #0fa048;
    font-weight: 500;
}

.hot-more {
    position: absolute;
    left: 975px;
    width: 20px;
    height: 40px;
    margin-top: 6px;
}

/* bottom bar */
.bottom-bar {
    flex: none;
    height: 279px;
    background: #252525;
}

.tool-row {
    display: grid;
    grid-template-columns: 248px repeat(4, 1fr);
    height: 170px;
}

.tool-sector {
    display: flex;
    flex-direction: column;
    align-items: center;
    padding-top: 13px;
    color: #bdbdbd;
}

.sector-caret {
    width: 0;
    height: 0;
    border-left: 13px solid transparent;
    border-right: 13px solid transparent;
    border-bottom: 15px solid #b5b5b5;
}

.sector-name {
    margin-top: 17px;
    font-size: 36px;
    line-height: 44px;
}

.sector-rate {
    margin-top: 15px;
    font-size: 39px;
    line-height: 44px;
    color: #1fe02f;
}

.tool {
    display: flex;
    flex-direction: column;
    align-items: center;
    padding-top: 23px;
}

.tool-icon {
    width: 58px;
    height: 54px;
}

.tool-text {
    margin-top: 11px;
    font-size: 35px;
    line-height: 44px;
    color: #bdbdbd;
}

.sys-nav {
    display: flex;
    align-items: flex-end;
    margin-top: 21px;
    padding-left: 247px;
}

.sys-menu {
    width: 46px;
    height: 36px;
    fill: #bdbdbd;
}

.sys-home {
    width: 58px;
    height: 44px;
    margin-left: 218px;
}

.sys-return {
    width: 50px;
    height: 42px;
    margin-left: 231px;
}

.source-mark {
    position: absolute;
    left: 909px;
    bottom: 22px;
    font-size: 28px;
    line-height: 34px;
    color: #fff;
    text-shadow: 1px 1px 1px #000;
    white-space: nowrap;
}

.source-head {
    font-size: 31px;
    font-weight: 700;
}
```

FILE: chart.js
```js
// Volume bars, one per minute: [height in px, colour key].
const volumeBars = [
    [70,'g'],[219,'g'],[204,'g'],[152,'r'],[108,'k'],[101,'r'],[123,'g'],[243,'g'],[254,'k'],[185,'g'],
    [68,'r'],[74,'r'],[115,'k'],[58,'g'],[98,'g'],[144,'g'],[253,'g'],[340,'r'],[71,'k'],[130,'g'],
    [140,'r'],[43,'r'],[122,'k'],[49,'g'],[152,'r'],[23,'k'],[89,'r'],[28,'r'],[23,'g'],[39,'r'],
    [17,'g'],[17,'g'],[19,'k'],[17,'k'],[33,'k'],[17,'g'],[31,'g'],[39,'k'],[91,'k'],[29,'r'],
    [52,'g'],[60,'k'],[25,'r'],[11,'g'],[79,'k'],[39,'k'],[34,'g'],[86,'r'],[15,'g'],[25,'r'],
    [20,'k'],[18,'k'],[18,'k'],[11,'g'],[7,'k'],[14,'k'],[17,'k'],[8,'k'],[16,'r'],[21,'r'],
    [27,'g'],[17,'g'],[17,'k'],[60,'k'],[16,'g'],[23,'r'],[11,'g'],[13,'k'],[78,'r'],[18,'g'],
    [13,'g'],[10,'g'],[15,'r'],[8,'g'],[19,'r'],[20,'r'],[16,'k'],[21,'g'],[171,'g'],[23,'k'],
    [29,'k'],[21,'r'],[25,'g'],[11,'r'],[17,'g'],[17,'r'],[7,'k'],[38,'k'],[13,'g'],[16,'r'],
    [11,'k'],[8,'k'],[28,'r'],[168,'g'],[195,'g'],[204,'g'],[126,'r'],[21,'g'],[11,'r'],[18,'g'],
    [10,'k'],[9,'r'],[15,'g'],[11,'g'],[5,'k'],[10,'r'],[15,'r'],[15,'g'],[20,'g'],[6,'k'],
    [13,'k'],[106,'r'],[13,'g'],[5,'g'],[3,'k'],[4,'r'],[2,'k'],[4,'k'],[9,'k'],[2,'k'],
    [6,'k'],[106,'k'],[29,'r'],[12,'k'],[5,'g'],[49,'g'],[21,'k'],[31,'k'],[23,'k'],[4,'r'],
    [86,'r'],[13,'r'],[15,'g'],[7,'k'],[10,'r'],[3,'g'],[34,'g'],[5,'g'],[6,'k'],[18,'k'],
    [5,'g'],[20,'r'],[7,'g'],[29,'k'],[3,'r'],[12,'g'],[12,'k'],[11,'k'],[23,'k'],[86,'k'],
    [20,'g'],[13,'k'],[72,'k'],[11,'r'],[13,'r'],[7,'g'],[3,'g']
];

const barColours = {
    g: { line: '#4b9a42', pale: '#b4e8a6' },
    r: { line: '#cc4a4a', pale: '#f6c2b6' },
    k: { line: '#6e6e6e', pale: '#bcbcbc' }
};

const volumeSvg = document.getElementById('volumeSvg');
const baseY = 1762;

function addRect (x, width, height, colour) {
    const rect = document.createElementNS('http://www.w3.org/2000/svg', 'rect');
    rect.setAttribute('x', x);
    rect.setAttribute('y', baseY - height);
    rect.setAttribute('width', width);
    rect.setAttribute('height', height);
    rect.setAttribute('fill', colour);
    volumeSvg.appendChild(rect);
}

volumeBars.forEach(function (bar, i) {
    const x = 15 + 3.025 * i;
    const colour = barColours[bar[1]];
    addRect(x - 0.8, 3, bar[0], colour.pale);
});

// Dark lines go in a second pass so the pale sides never cover them.
volumeBars.forEach(function (bar, i) {
    const x = 15 + 3.025 * i;
    addRect(x - 0.3, 1.5, bar[0], barColours[bar[1]].line);
});
```
